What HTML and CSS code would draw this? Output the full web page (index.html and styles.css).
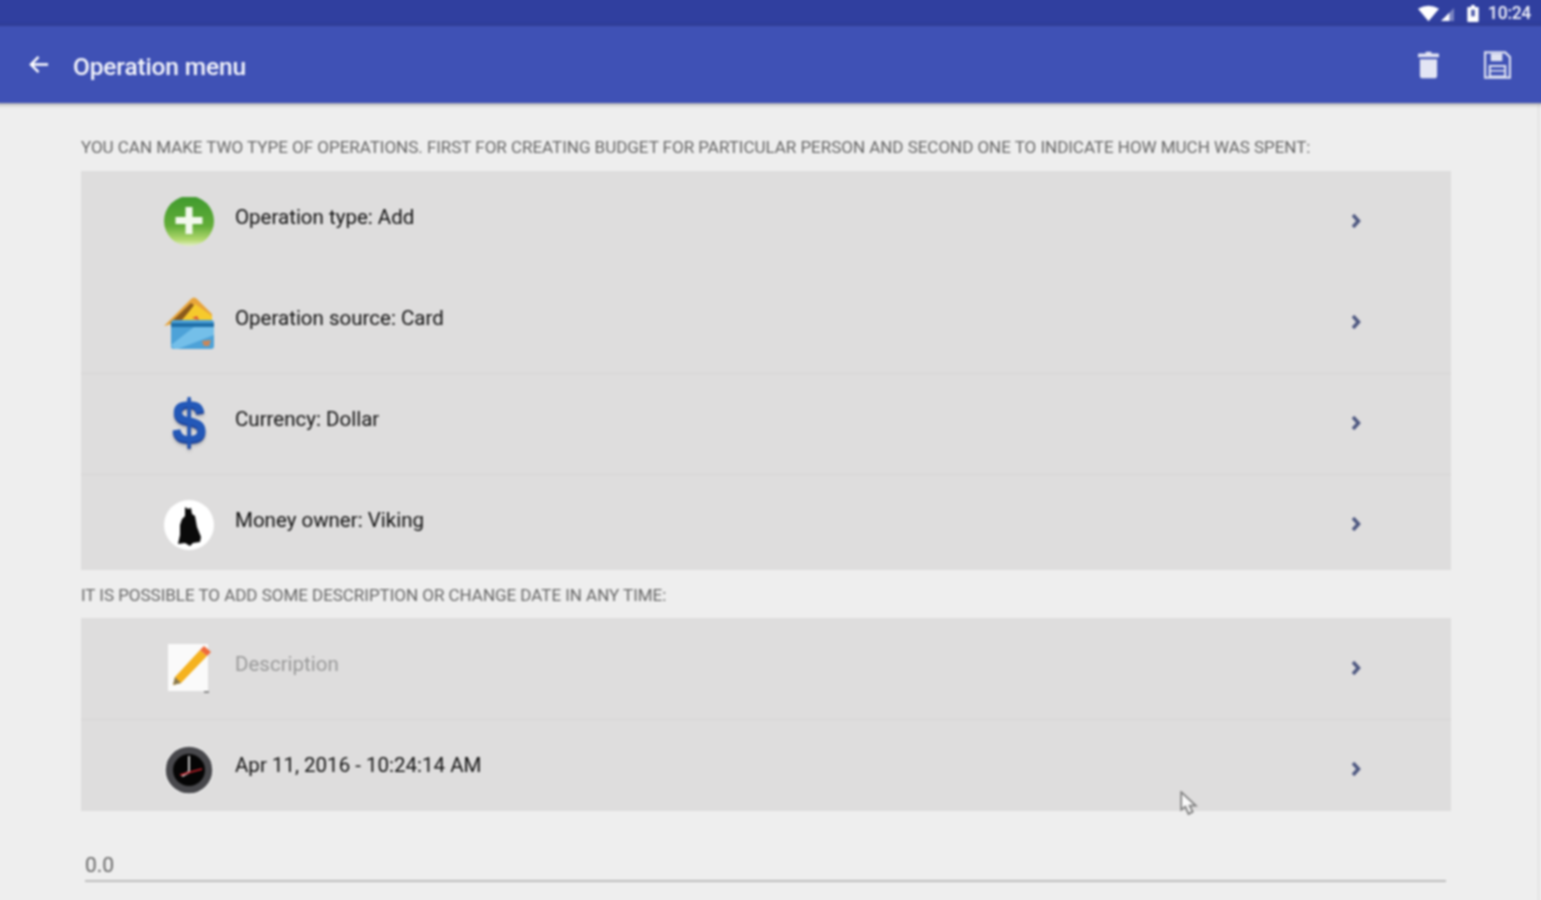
FILE: index.html
```html
<!DOCTYPE html>
<html lang="en">
<head>
<meta charset="utf-8">
<title>Operation menu</title>
<link rel="stylesheet" href="styles.css">
</head>
<body>
<div class="screen">
  <div class="statusbar">
    <svg class="st-wifi" viewBox="0 0 22 16"><path d="M0 3 Q11 -3 22 3 L11 16Z" fill="#fff"/></svg>
    <svg class="st-signal" viewBox="0 0 14 14"><path d="M14 0V14H0Z" fill="#fff" opacity=".35"/><path d="M9 5V14H0Z" fill="#fff"/></svg>
    <svg class="st-batt" viewBox="0 0 12 18"><path d="M4 0h4v2h3a1 1 0 0 1 1 1v14a1 1 0 0 1-1 1H1a1 1 0 0 1-1-1V3a1 1 0 0 1 1-1h3z" fill="#fff"/><path d="M4 5h4v7H4z" fill="#5561ad"/></svg>
    <span class="st-time">10:24</span>
  </div>
  <header class="toolbar">
    <svg class="back" viewBox="0 0 22 20"><path d="M20 10H3M10 2l-8 8 8 8" fill="none" stroke="#fff" stroke-width="2.6"/></svg>
    <h1 class="title">Operation menu</h1>
    <svg class="act-trash" viewBox="0 0 22 28"><path d="M8 0h6v2h7q1 0 1 1v3H0V3q0-1 1-1h7z" fill="#e3e5f4"/><path d="M2 8h18v17a3 3 0 0 1-3 3H5a3 3 0 0 1-3-3z" fill="#e3e5f4"/></svg>
    <svg class="act-save" viewBox="0 0 28 28"><path d="M1 1h21l5 5v21H1z" fill="none" stroke="#dfe2f2" stroke-width="2.4"/><path d="M7 2h12v8H7z" fill="#dfe2f2"/><path d="M6 15h16v11H6z" fill="none" stroke="#dfe2f2" stroke-width="2.2"/><path d="M6 20h16" stroke="#dfe2f2" stroke-width="1.6"/></svg>
  </header>
  <main class="content">
    <p class="hint hint-first">You can make two type of operations. First for creating budget for particular person and second one to indicate how much was spent:</p>
    <section class="group">
      <div class="row row-nodiv">
        <svg class="icon" viewBox="0 0 50 50">
          <defs><linearGradient id="g1" x1="0" y1="0" x2="0" y2="1"><stop offset="0" stop-color="#3f9a2e"/><stop offset=".6" stop-color="#62ad38"/><stop offset=".88" stop-color="#b4da70"/><stop offset="1" stop-color="#e3efc8"/></linearGradient></defs>
          <circle cx="25" cy="24" r="25" fill="url(#g1)"/><path d="M25 10v27M11.500 23.500h27" stroke="#f2f8ec" stroke-width="7"/>
        </svg>
        <span class="label">Operation type: Add</span>
        <svg class="chev" viewBox="0 0 10 14"><path d="M2 1l5.500 6-5.500 6" fill="none" stroke="#4d5780" stroke-width="3.500"/></svg>
      </div>
      <div class="row row-nodiv">
        <svg class="icon icon-card" viewBox="0 0 50 54">
          <path d="M0 30L27 3q3-3 6 0l15 15v10H8z" fill="#e8a53a"/><path d="M6 27L27 7l4 3L13 29z" fill="#8a5a1c"/><path d="M16 27L31 8l17 12v8z" fill="#f6ca2c"/><path d="M28 22l5-2 2 4z" fill="#d8503a"/>
          <rect x="7" y="24" width="43" height="29" rx="3" fill="#4da2d8"/><path d="M7 27h43v4H7z" fill="#1f6fa8"/><path d="M7 49L30 31h20v8L14 53H10z" fill="#74bfe9"/><path d="M38 45l9-1-2 6-5 0z" fill="#c8875a"/>
        </svg>
        <span class="label">Operation source: Card</span>
        <svg class="chev" viewBox="0 0 10 14"><path d="M2 1l5.500 6-5.500 6" fill="none" stroke="#4d5780" stroke-width="3.500"/></svg>
      </div>
      <div class="row">
        <span class="icon dollar">$</span>
        <span class="label">Currency: Dollar</span>
        <svg class="chev" viewBox="0 0 10 14"><path d="M2 1l5.500 6-5.500 6" fill="none" stroke="#4d5780" stroke-width="3.500"/></svg>
      </div>
      <div class="row row-short">
        <svg class="icon" viewBox="0 0 50 50">
          <circle cx="25" cy="25" r="25" fill="#fff"/>
          <path d="M21 7l3 2 3-1 1 6 3 2 2 11 4 10-1 5-7 1-3 3-5-3-7 1 2-9 0-10 2-6 3-3z" fill="#0a0a0a"/>
        </svg>
        <span class="label">Money owner: Viking</span>
        <svg class="chev" viewBox="0 0 10 14"><path d="M2 1l5.500 6-5.500 6" fill="none" stroke="#4d5780" stroke-width="3.500"/></svg>
      </div>
    </section>
    <p class="hint hint-second">It is possible to add some description or change date in any time:</p>
    <section class="group">
      <div class="row row-nodiv">
        <svg class="icon" viewBox="0 0 50 50">
          <path d="M4 0h40v47H4z" fill="#fafafa"/><path d="M40 47h5v2h-5z" fill="#888"/>
          <path d="M11 33L36 6l7 6-26 27-8 2z" fill="#f5b21f"/><path d="M9 41l2-8 6 6z" fill="#8a7a50"/><path d="M36 6l4-4 7 6-4 4z" fill="#ef6a3a"/>
        </svg>
        <span class="label label-muted">Description</span>
        <svg class="chev" viewBox="0 0 10 14"><path d="M2 1l5.500 6-5.500 6" fill="none" stroke="#4d5780" stroke-width="3.500"/></svg>
      </div>
      <div class="row row-last">
        <svg class="icon" viewBox="0 0 50 50">
          <circle cx="25" cy="25" r="24" fill="#48484c" stroke="#e8e8e8" stroke-width="1.500"/><circle cx="25" cy="25" r="16" fill="#050505"/>
          <path d="M25 11v17" stroke="#ddd" stroke-width="1.800"/><path d="M25 27l-7 4" stroke="#ddd" stroke-width="2.200"/><path d="M16 30L38 24" stroke="#c8202a" stroke-width="1.800"/>
        </svg>
        <span class="label">Apr 11, 2016 - 10:24:14 AM</span>
        <svg class="chev" viewBox="0 0 10 14"><path d="M2 1l5.500 6-5.500 6" fill="none" stroke="#4d5780" stroke-width="3.500"/></svg>
      </div>
    </section>
    <div class="amount">0.0</div>
  </main>
  <svg class="cursor" viewBox="0 0 18 24"><path d="M2 1v17l4-3 3 7 4-2-3-6h6z" fill="#fafafa" stroke="#808080" stroke-width="1.700"/></svg>
</div>
</body>
</html>
```

FILE: styles.css
```css
* { box-sizing: border-box; }
html, body { margin: 0; height: 100%; overflow: hidden; background: #eeeeee; }
body { font-family: Roboto, "Liberation Sans", sans-serif; }
/* The sheet bleeds 4px past the window so the soft focus has no visible edge */
.screen { position: relative; margin: -4px; height: 908px; width: 1549px; overflow: hidden; filter: blur(0.8px); background: #eeeeee; }
.screen::after { content: ""; position: absolute; top: 108px; bottom: 0; right: 6px; width: 1px; background: #dcdcdc; }

.statusbar { height: 30px; background: #303f9f; display: flex; align-items: center; justify-content: flex-end; padding: 4px 14px 0 0; color: #f1f2fa; }
.st-wifi { width: 21px; height: 17px; margin-right: 2px; }
.st-signal { width: 13px; height: 13px; margin-right: 13px; margin-top: 2px; }
.st-batt { width: 12px; height: 17px; margin-right: 9px; }
.st-time { font-size: 17.500px; font-weight: 500; letter-spacing: -0.3px; }

.toolbar { height: 77px; background: #3f51b5; display: flex; align-items: center; padding: 0 34px 0 33px; box-shadow: 0 1px 4px rgba(60, 60, 70, .55); position: relative; z-index: 1; }
.back { width: 21px; height: 19px; }
.title { margin: 0 0 0 23px; font-size: 24.500px; font-weight: 500; color: #f4f5fb; flex: 1; letter-spacing: -0.15px; position: relative; top: 2px; }
.act-trash { width: 21px; height: 28px; margin-right: 45px; }
.act-save { width: 27px; height: 28px; }

.content { padding: 0 94px 0 85px; }
.hint { margin: 0; font-size: 17px; line-height: 20px; color: #666; text-transform: uppercase; white-space: nowrap; letter-spacing: -0.03px; }
.hint-first { padding-top: 34px; height: 68px; }
.hint-second { padding-top: 15px; height: 48px; }

.group { background: #dedddd; }
.row { height: 101px; display: flex; align-items: flex-start; padding: 25px 90px 0 83px; border-top: 1px solid #d6d5d5; }
.row-nodiv { border-top-color: #dedddd; }
.row-short { height: 96px; }
.row-last { height: 92px; }
.group > .row:first-child { border-top: 0; padding-top: 26px; }
.icon { width: 50px; height: 50px; flex: none; }
.icon-card { height: 54px; margin-top: -2px; margin-bottom: -2px; }
.dollar { font-family: "Liberation Sans", sans-serif; font-weight: 700; font-size: 62px; line-height: 44px; text-align: center; color: #2358b8; text-shadow: 0 2px 1px #1a3f96, 0 4px 3px rgba(90, 90, 90, .35); }
.label { margin-left: 21px; font-size: 20.500px; line-height: 24px; color: #111; flex: 1; padding-top: 8px; }
.label-muted { color: #999; }
.chev { width: 10px; height: 14px; flex: none; margin-top: 17px; }

.amount { margin: 40px 5px 0 4px; height: 31px; border-bottom: 2px solid #bcbcbc; font-size: 21px; line-height: 28px; color: #666; }
.cursor { position: absolute; left: 1183px; top: 795px; width: 19px; height: 25px; z-index: 2; }
```
